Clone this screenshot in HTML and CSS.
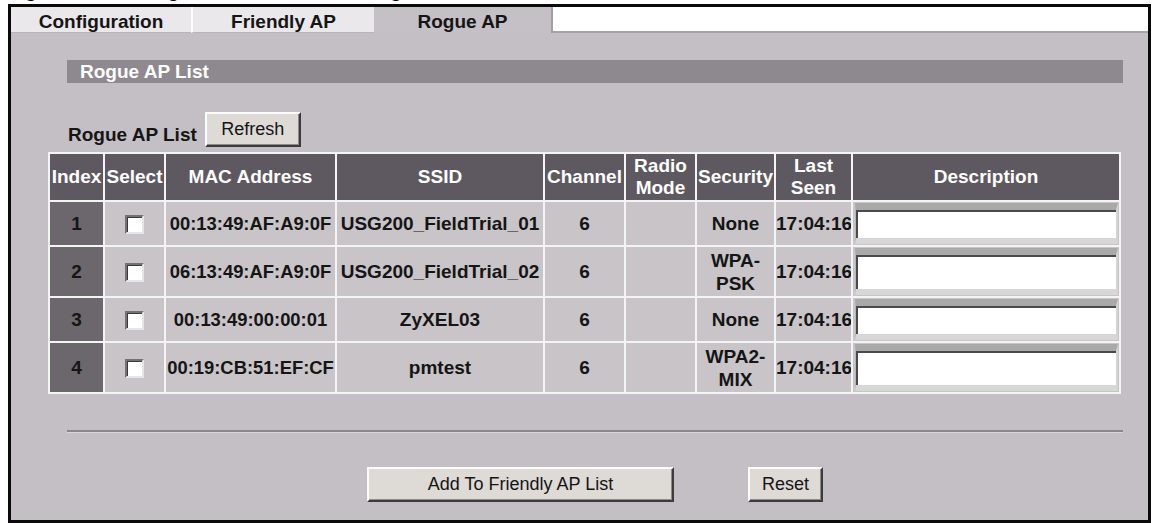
FILE: index.html
```html
<!DOCTYPE html>
<html lang="en">
<head>
<meta charset="utf-8">
<title>Rogue AP</title>
<link rel="stylesheet" href="styles.css">
</head>
<body>
<div class="caption"><span>Figure 190&nbsp;&nbsp; Configuration &gt; Wireless &gt; Rogue AP</span></div>
<div class="frame">
  <div class="tabs">
    <div class="tab tab-config">Configuration</div>
    <div class="tab tab-friendly">Friendly AP</div>
    <div class="tab tab-rogue">Rogue AP</div>
    <div class="tab-fill"></div>
  </div>
  <div class="panel">
    <div class="section-bar">Rogue AP List</div>
    <div class="list-head">
      <span class="list-label">Rogue AP List</span>
      <button class="btn btn-refresh" type="button">Refresh</button>
    </div>
    <table class="grid">
      <colgroup>
        <col class="c-index"><col class="c-select"><col class="c-mac"><col class="c-ssid"><col class="c-channel"><col class="c-radio"><col class="c-security"><col class="c-seen"><col class="c-desc">
      </colgroup>
      <thead>
        <tr class="r-head">
          <th>Index</th><th>Select</th><th>MAC Address</th><th>SSID</th><th>Channel</th><th>Radio<br>Mode</th><th>Security</th><th>Last<br>Seen</th><th>Description</th>
        </tr>
      </thead>
      <tbody>
        <tr class="r-single">
          <td class="idx">1</td><td><span class="chk"></span></td><td class="mac">00:13:49:AF:A9:0F</td><td>USG200_FieldTrial_01</td><td>6</td><td></td><td>None</td><td>17:04:16</td><td class="desc"><span class="field"></span></td>
        </tr>
        <tr class="r-double">
          <td class="idx">2</td><td><span class="chk"></span></td><td class="mac">06:13:49:AF:A9:0F</td><td>USG200_FieldTrial_02</td><td>6</td><td></td><td>WPA-<br>PSK</td><td>17:04:16</td><td class="desc"><span class="field"></span></td>
        </tr>
        <tr class="r-single">
          <td class="idx">3</td><td><span class="chk"></span></td><td class="mac">00:13:49:00:00:01</td><td>ZyXEL03</td><td>6</td><td></td><td>None</td><td>17:04:16</td><td class="desc"><span class="field"></span></td>
        </tr>
        <tr class="r-double">
          <td class="idx">4</td><td><span class="chk"></span></td><td class="mac">00:19:CB:51:EF:CF</td><td>pmtest</td><td>6</td><td></td><td>WPA2-<br>MIX</td><td>17:04:16</td><td class="desc"><span class="field"></span></td>
        </tr>
      </tbody>
    </table>
    <div class="divider"></div>
    <div class="actions">
      <button class="btn btn-add" type="button">Add To Friendly AP List</button>
      <button class="btn btn-reset" type="button">Reset</button>
    </div>
  </div>
</div>
</body>
</html>
```
FILE: styles.css
```css
* { box-sizing: border-box; }
html, body { margin: 0; padding: 0; background: #ffffff; }
body {
  font-family: "Liberation Sans", Arial, sans-serif;
  width: 1154px;
  height: 523px;
  overflow: hidden;
}

.caption {
  height: 4px;
  overflow: hidden;
  display: flex;
  align-items: flex-end;
  padding-left: 8px;
}
.caption span {
  font-weight: bold;
  font-size: 19px;
  line-height: 26px;
  white-space: nowrap;
  color: #000;
}

.frame {
  margin-left: 8px;
  width: 1143px;
  height: 519px;
  border: 3px solid #0a0a0a;
  display: flex;
  flex-direction: column;
  background: #c3bfc4;
}

/* tabs */
.tabs { display: flex; height: 26px; background: #fff; }
.tab {
  font-weight: bold;
  font-size: 19px;
  line-height: 23px;
  padding-top: 3px;
  text-align: center;
  color: #151515;
  background: #eae8ea;
  border-bottom: 1px solid #b8b4b8;
}
.tab-config { width: 180px; }
.tab-friendly { width: 183px; border-left: 2px solid #fbfbfb; }
.tab-rogue {
  width: 179px;
  background: #c4c0c5;
  border-right: 2px solid #a29ea3;
  border-bottom: none;
}
.tab-fill { flex: 1; background: #fff; border-bottom: 2px solid #a6a2a6; }

/* panel */
.panel { flex: 1; background: #c3bfc4; }

.section-bar {
  margin: 27px 25px 0 56px;
  height: 23px;
  background: #8d898e;
  color: #fff;
  font-weight: bold;
  font-size: 19px;
  line-height: 23px;
  padding-left: 13px;
}

.list-head {
  display: flex;
  align-items: flex-end;
  margin: 29px 0 0 57px;
  height: 35px;
}
.list-label {
  font-weight: bold;
  font-size: 19px;
  line-height: 23px;
  color: #151515;
  margin-bottom: 1px;
}

.btn {
  font-family: "Liberation Sans", Arial, sans-serif;
  font-size: 18px;
  color: #151515;
  background: #dedad6;
  border: 2px solid;
  border-color: #fcfcfc #3c3c3c #3c3c3c #fcfcfc;
  box-shadow: inset -1px -1px 0 #8e8a8a;
  padding: 0;
  height: 35px;
}
.btn-refresh { margin-left: 8px; width: 96px; }

/* table */
.grid {
  margin: 5px 0 0 37px;
  width: 1073px;
  table-layout: fixed;
  border-collapse: separate;
  border-spacing: 0;
  border-top: 2px solid #f4f4f4;
  border-left: 2px solid #f4f4f4;
}
.c-index { width: 55px; }
.c-select { width: 61px; }
.c-mac { width: 171px; }
.c-ssid { width: 208px; }
.c-channel { width: 81px; }
.c-radio { width: 71px; }
.c-security { width: 79px; }
.c-seen { width: 77px; }
.c-desc { width: 268px; }

.grid th, .grid td {
  padding: 0;
  border-right: 2px solid #f4f4f4;
  border-bottom: 2px solid #f4f4f4;
  text-align: center;
  vertical-align: middle;
  font-size: 19px;
  font-weight: bold;
  line-height: 23px;
  white-space: nowrap;
  overflow: hidden;
}
.grid th { background: #5e5960; color: #fff; line-height: 22px; }
.grid td { background: #c8c4c8; color: #151515; }
.grid td.idx { background: #6c676d; }
.grid td.mac { font-size: 18.4px; }

.r-head { height: 48px; }
.r-single { height: 44px; }
.r-double { height: 51px; }

.chk {
  display: inline-block;
  width: 19px;
  height: 19px;
  background: #fff;
  border: 2px solid;
  border-color: #727272 #e6e6e6 #e6e6e6 #727272;
  box-shadow: inset 1px 1px 0 #3a3a3a;
  vertical-align: middle;
}

.grid td.desc { padding: 1px 1px 1px 2px; }
.field {
  display: block;
  height: 41px;
  background: #fff;
  border-top: 7px solid #a9a9a9;
  border-bottom: 6px solid #d7d7d7;
  border-left: 1px solid #b8b8b8;
  border-right: 2px solid #d4d4d4;
  box-shadow: inset 2px 2px 0 #4a4a4a;
}
.r-double .field { height: 47px; }

.divider {
  margin: 36px 25px 0 56px;
  height: 3px;
  background: #8b888b;
  border-bottom: 1px solid #d8d6d8;
}

.actions {
  display: flex;
  justify-content: center;
  gap: 74px;
  margin-top: 34px;
  padding-left: 31px;
}
.btn-add { width: 307px; }
.btn-reset { width: 75px; }
```
